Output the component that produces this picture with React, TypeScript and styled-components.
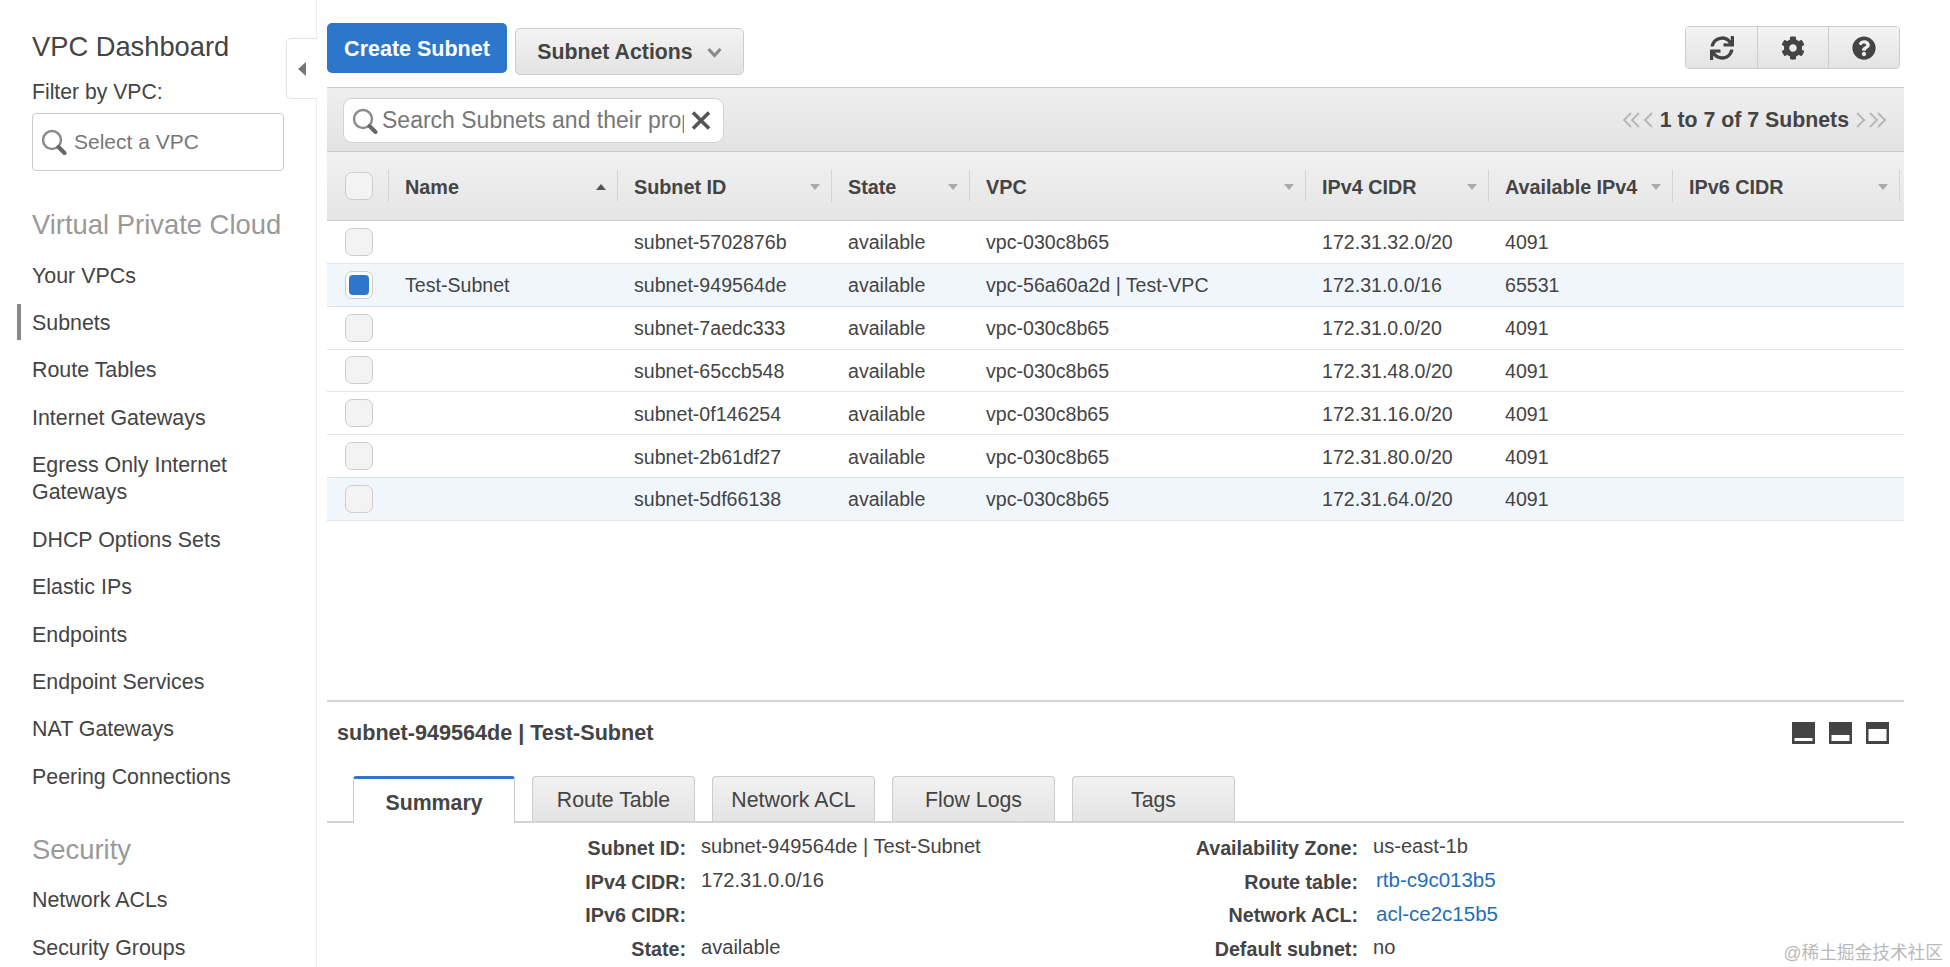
import React from "react";
import styled, { createGlobalStyle } from "styled-components";
import { FaSync, FaCog, FaQuestionCircle } from "react-icons/fa";

const Global = createGlobalStyle`
  html, body { margin: 0; padding: 0; background: #fff; }
  body { font-family: "Liberation Sans", Arial, sans-serif; color: #444; }
  * { box-sizing: border-box; }
`;

const Page = styled.div`
  position: relative;
  display: flex;
  width: 1950px;
  height: 967px;
  overflow: hidden;
  background: #fff;
`;

const Sidebar = styled.aside`
  position: relative;
  flex: 0 0 317px;
  padding: 31px 20px 0 32px;
  border-right: 1px solid #eee;
`;

const CollapseTab = styled.div`
  position: absolute;
  right: -1px;
  top: 38px;
  width: 31px;
  height: 61px;
  display: flex;
  align-items: center;
  padding-left: 11px;
  background: #fff;
  border: 1px solid #e4e4e4;
  border-right: none;
  border-radius: 5px 0 0 5px;
`;

const CollapseArrow = styled.span`
  width: 0;
  height: 0;
  border-top: 7px solid transparent;
  border-bottom: 7px solid transparent;
  border-right: 8px solid #777;
`;

const SideTitle = styled.div`
  font-size: 27.3px;
  line-height: 32px;
  color: #444;
`;

const FilterLabel = styled.div`
  margin-top: 16px;
  font-size: 21.2px;
  line-height: 26px;
  color: #444;
`;

const SelectBox = styled.div`
  margin-top: 8px;
  width: 252px;
  height: 58px;
  display: flex;
  align-items: center;
  gap: 7px;
  padding-left: 8px;
  border: 1px solid #ccc;
  border-radius: 4px;
  font-size: 21px;
  color: #777;
`;

const SectionTitle = styled.div<{ $top: number }>`
  margin-top: ${(p) => p.$top}px;
  font-size: 27.4px;
  line-height: 32px;
  color: #999;
`;

const NavList = styled.nav`
  margin-top: 21.5px;
  display: flex;
  flex-direction: column;
  gap: 20.45px;
`;

const NavItem = styled.div<{ $active?: boolean }>`
  position: relative;
  font-size: 21.4px;
  line-height: 27px;
  color: #444;
  ${(p) =>
    p.$active &&
    `&::before {
      content: "";
      position: absolute;
      left: -15px;
      top: -6px;
      width: 4px;
      height: 36px;
      background: #888;
    }`}
`;

const Main = styled.main`
  flex: 0 0 1577px;
  min-width: 0;
  margin-left: 10px;
  display: flex;
  flex-direction: column;
  height: 967px;
`;

const TopBar = styled.div`
  flex: 0 0 87px;
  display: flex;
  align-items: flex-start;
`;

const PrimaryButton = styled.button`
  margin-top: 23px;
  width: 180px;
  height: 50px;
  padding-top: 4px;
  border: none;
  border-radius: 5px;
  background: #2c77cb;
  color: #fff;
  font: bold 21.5px "Liberation Sans", Arial, sans-serif;
`;

const ActionsButton = styled.button`
  margin: 28px 0 0 8px;
  width: 229px;
  height: 47px;
  padding-top: 2px;
  display: flex;
  align-items: center;
  justify-content: center;
  gap: 14px;
  border: 1px solid #ccc;
  border-radius: 5px;
  background: linear-gradient(#f3f3f3, #e3e3e3);
  color: #444;
  font: bold 21.3px "Liberation Sans", Arial, sans-serif;
`;

const ToolGroup = styled.div`
  margin: 26px 4px 0 auto;
  display: flex;
  height: 43px;
  border: 1px solid #ccc;
  border-radius: 4px;
  overflow: hidden;
`;

const ToolButton = styled.div`
  width: 71px;
  display: flex;
  align-items: center;
  justify-content: center;
  background: linear-gradient(#f3f3f3, #e4e4e4);
  color: #444;
  font-size: 24px;
  & + & { border-left: 1px solid #ccc; }
`;

const SearchBand = styled.div`
  flex: 0 0 65px;
  display: flex;
  align-items: center;
  padding: 0 16px;
  background: linear-gradient(#efefef, #e3e3e3);
  border-top: 1px solid #ccc;
  border-bottom: 1px solid #c9c9c9;
`;

const SearchBox = styled.div`
  width: 381px;
  height: 45px;
  margin-top: 2px;
  display: flex;
  align-items: center;
  padding-left: 8px;
  background: #fff;
  border: 1px solid #d2d2d2;
  border-radius: 9px;
`;

const SearchText = styled.div`
  margin: 0 7px 0 4px;
  width: 302px;
  overflow: hidden;
  white-space: nowrap;
  font-size: 23px;
  color: #777;
`;

const Pager = styled.div`
  margin-left: auto;
  margin-top: 1px;
  display: flex;
  align-items: center;
  font-weight: bold;
  font-size: 21.3px;
  color: #444;
`;

const PagerText = styled.span`
  margin: 0 5px;
`;

const TableHead = styled.div`
  flex: 0 0 69px;
  display: grid;
  grid-template-columns: 61px 229px 214px 138px 336px 183px 184px 227px minmax(0, 1fr);
  align-items: center;
  background: linear-gradient(#f1f1f1, #e5e5e5);
  border-bottom: 1px solid #c9c9c9;
`;

const CheckCell = styled.div`
  padding-left: 18px;
  display: flex;
  align-items: center;
`;

const HeadCell = styled.div`
  height: 32px;
  display: flex;
  align-items: center;
  justify-content: space-between;
  padding: 2px 11px 0 16px;
  border-left: 1px solid #d4d4d4;
  font-weight: bold;
  font-size: 19.8px;
  color: #444;
  white-space: nowrap;
`;

const HeadEnd = styled.div`
  height: 32px;
  border-left: 1px solid #d4d4d4;
`;

const Caret = styled.span<{ $up?: boolean }>`
  width: 0;
  height: 0;
  border-left: 5px solid transparent;
  border-right: 5px solid transparent;
  ${(p) =>
    p.$up
      ? "border-bottom: 6px solid #555;"
      : "border-top: 6px solid #aaa;"}
`;

const Box = styled.div<{ $checked?: boolean }>`
  width: 28px;
  height: 28px;
  display: flex;
  align-items: center;
  justify-content: center;
  border: 1px solid #ccc;
  border-radius: 7px;
  background: ${(p) => (p.$checked ? "#fff" : "#f3f3f3")};
`;

const BoxMark = styled.span`
  width: 20px;
  height: 20px;
  border-radius: 4px;
  background: #2c77cb;
`;

const Row = styled.div<{ $tint?: boolean }>`
  flex: 0 0 42.85px;
  display: grid;
  grid-template-columns: 61px 229px 214px 138px 336px 183px 184px 227px minmax(0, 1fr);
  align-items: center;
  background: ${(p) => (p.$tint ? "#f0f6fb" : "#fff")};
  border-bottom: 1px solid #e0e4e7;
`;

const Cell = styled.div`
  padding: 2px 0 0 17px;
  font-size: 19.6px;
  color: #444;
  white-space: nowrap;
`;

const Filler = styled.div`
  flex: 1 1 auto;
`;

const Detail = styled.section`
  flex: 0 0 267px;
  border-top: 2px solid #d4d4d4;
`;

const DetailHead = styled.div`
  height: 74px;
  display: flex;
  align-items: center;
  justify-content: space-between;
  padding: 0 15px 12px 10px;
`;

const DetailTitle = styled.div`
  font-weight: bold;
  font-size: 21.6px;
  color: #444;
`;

const PanelIcons = styled.div`
  display: flex;
  gap: 14px;
`;

const Tabs = styled.div`
  height: 47px;
  display: flex;
  align-items: flex-end;
  gap: 17px;
  padding-left: 26px;
  border-bottom: 2px solid #d4d4d4;
`;

const Tab = styled.div<{ $active?: boolean }>`
  width: ${(p) => (p.$active ? "162px" : "163px")};
  display: flex;
  align-items: center;
  justify-content: center;
  ${(p) =>
    p.$active
      ? `height: 47px;
         margin-bottom: -2px;
         padding-top: 5px;
         background: #fff;
         border: 1px solid #ccc;
         border-top: 3px solid #2c77cb;
         border-bottom: none;
         border-radius: 3px 3px 0 0;
         font-weight: bold;
         font-size: 21.3px;`
      : `height: 45px;
         padding-top: 2px;
         background: linear-gradient(#f1f1f1, #e4e4e4);
         border: 1px solid #ccc;
         border-bottom: none;
         border-radius: 4px 4px 0 0;
         font-size: 21.3px;`}
  color: #444;
`;

const DetailGrid = styled.div`
  margin-top: 8px;
  display: grid;
  grid-template-columns: 359px 280px 362px 1fr;
  column-gap: 15px;
  grid-auto-rows: 33.6px;
  align-items: center;
`;

const Label = styled.div`
  padding-top: 2px;
  text-align: right;
  font-weight: bold;
  font-size: 19.7px;
  color: #444;
  white-space: nowrap;
`;

const Value = styled.div`
  margin-top: -2px;
  font-size: 20.1px;
  color: #444;
  white-space: nowrap;
`;

const LinkValue = styled.a`
  margin: -2px 0 0 3px;
  font-size: 20.5px;
  color: #1f6fb5;
  white-space: nowrap;
`;

const Watermark = styled.div`
  position: absolute;
  right: 7px;
  bottom: 3px;
  font-family: "Liberation Sans", "Noto Sans CJK SC", sans-serif;
  font-size: 17.7px;
  color: #b9b9b9;
`;

const Lens = ({ size = 26 }: { size?: number }) => (
  <svg width={size} height={size} viewBox="0 0 26 26" fill="none">
    <circle cx="11" cy="11" r="9" stroke="#8a8a8a" strokeWidth="2.4" />
    <path d="M17.5 18l6 6" stroke="#666" strokeWidth="4" strokeLinecap="round" />
  </svg>
);

const Chev = ({ dir, double }: { dir: "l" | "r"; double?: boolean }) => {
  const pts = dir === "l" ? ["M10 2 3 9l7 7", "M18 2l-7 7 7 7"] : ["M3 2l7 7-7 7", "M11 2l7 7-7 7"];
  return (
    <svg width={double ? 21 : 13} height="18" viewBox={double ? "0 0 21 18" : "0 0 13 18"} fill="none" stroke="#b8b8b8" strokeWidth="2">
      <path d={pts[0]} />
      {double && <path d={pts[1]} />}
    </svg>
  );
};

const PanelIcon = ({ y, h }: { y: number; h: number }) => (
  <svg width="23" height="22" viewBox="0 0 23 22">
    <rect width="23" height="22" fill="#444" />
    <rect x="2.5" y={y} width="18" height={h} fill="#fff" />
  </svg>
);

const XIcon = () => (
  <svg width="20" height="19" viewBox="0 0 20 19" stroke="#555" strokeWidth="3.6" fill="none">
    <path d="M2 1.5l16 16M18 1.5l-16 16" />
  </svg>
);

const ChevDown = () => (
  <svg width="15" height="11" viewBox="0 0 15 11" fill="none" stroke="#888" strokeWidth="3">
    <path d="M1.5 2l6 6.5 6-6.5" />
  </svg>
);

const nav1 = ["Your VPCs", "Subnets", "Route Tables", "Internet Gateways", "Egress Only Internet Gateways", "DHCP Options Sets", "Elastic IPs", "Endpoints", "Endpoint Services", "NAT Gateways", "Peering Connections"];
const nav2 = ["Network ACLs", "Security Groups"];

const columns = ["Subnet ID", "State", "VPC", "IPv4 CIDR", "Available IPv4", "IPv6 CIDR"];

const rows = [
  { name: "", id: "subnet-5702876b", vpc: "vpc-030c8b65", cidr: "172.31.32.0/20", ip: "4091" },
  { name: "Test-Subnet", id: "subnet-949564de", vpc: "vpc-56a60a2d | Test-VPC", cidr: "172.31.0.0/16", ip: "65531", checked: true, tint: true },
  { name: "", id: "subnet-7aedc333", vpc: "vpc-030c8b65", cidr: "172.31.0.0/20", ip: "4091" },
  { name: "", id: "subnet-65ccb548", vpc: "vpc-030c8b65", cidr: "172.31.48.0/20", ip: "4091" },
  { name: "", id: "subnet-0f146254", vpc: "vpc-030c8b65", cidr: "172.31.16.0/20", ip: "4091" },
  { name: "", id: "subnet-2b61df27", vpc: "vpc-030c8b65", cidr: "172.31.80.0/20", ip: "4091" },
  { name: "", id: "subnet-5df66138", vpc: "vpc-030c8b65", cidr: "172.31.64.0/20", ip: "4091", tint: true },
];

const tabs = ["Route Table", "Network ACL", "Flow Logs", "Tags"];

export default function App() {
  return (
    <Page>
      <Global />
      <Sidebar>
        <CollapseTab>
          <CollapseArrow />
        </CollapseTab>
        <SideTitle>VPC Dashboard</SideTitle>
        <FilterLabel>Filter by VPC:</FilterLabel>
        <SelectBox>
          <Lens />
          Select a VPC
        </SelectBox>
        <SectionTitle $top={38}>Virtual Private Cloud</SectionTitle>
        <NavList>
          {nav1.map((n) => (
            <NavItem key={n} $active={n === "Subnets"}>{n}</NavItem>
          ))}
        </NavList>
        <SectionTitle $top={43}>Security</SectionTitle>
        <NavList>
          {nav2.map((n) => (
            <NavItem key={n}>{n}</NavItem>
          ))}
        </NavList>
      </Sidebar>
      <Main>
        <TopBar>
          <PrimaryButton>Create Subnet</PrimaryButton>
          <ActionsButton>
            Subnet Actions <ChevDown />
          </ActionsButton>
          <ToolGroup>
            <ToolButton><FaSync /></ToolButton>
            <ToolButton><FaCog /></ToolButton>
            <ToolButton><FaQuestionCircle /></ToolButton>
          </ToolGroup>
        </TopBar>
        <SearchBand>
          <SearchBox>
            <Lens />
            <SearchText>Search Subnets and their properties</SearchText>
            <XIcon />
          </SearchBox>
          <Pager>
            <Chev dir="l" double />
            <Chev dir="l" />
            <PagerText>1 to 7 of 7 Subnets</PagerText>
            <Chev dir="r" />
            <Chev dir="r" double />
          </Pager>
        </SearchBand>
        <TableHead>
          <CheckCell><Box /></CheckCell>
          <HeadCell>Name <Caret $up /></HeadCell>
          {columns.map((c) => (
            <HeadCell key={c}>{c} <Caret /></HeadCell>
          ))}
          <HeadEnd />
        </TableHead>
        {rows.map((r) => (
          <Row key={r.id} $tint={r.tint}>
            <CheckCell>
              <Box $checked={r.checked}>{r.checked && <BoxMark />}</Box>
            </CheckCell>
            <Cell>{r.name}</Cell>
            <Cell>{r.id}</Cell>
            <Cell>available</Cell>
            <Cell>{r.vpc}</Cell>
            <Cell>{r.cidr}</Cell>
            <Cell>{r.ip}</Cell>
          </Row>
        ))}
        <Filler />
        <Detail>
          <DetailHead>
            <DetailTitle>subnet-949564de | Test-Subnet</DetailTitle>
            <PanelIcons>
              <PanelIcon y={16} h={3} />
              <PanelIcon y={13} h={6} />
              <PanelIcon y={7} h={12} />
            </PanelIcons>
          </DetailHead>
          <Tabs>
            <Tab $active>Summary</Tab>
            {tabs.map((t) => (
              <Tab key={t}>{t}</Tab>
            ))}
          </Tabs>
          <DetailGrid>
            <Label>Subnet ID:</Label>
            <Value>subnet-949564de | Test-Subnet</Value>
            <Label>Availability Zone:</Label>
            <Value>us-east-1b</Value>
            <Label>IPv4 CIDR:</Label>
            <Value>172.31.0.0/16</Value>
            <Label>Route table:</Label>
            <LinkValue>rtb-c9c013b5</LinkValue>
            <Label>IPv6 CIDR:</Label>
            <Value />
            <Label>Network ACL:</Label>
            <LinkValue>acl-ce2c15b5</LinkValue>
            <Label>State:</Label>
            <Value>available</Value>
            <Label>Default subnet:</Label>
            <Value>no</Value>
          </DetailGrid>
        </Detail>
      </Main>
      <Watermark>@稀土掘金技术社区</Watermark>
    </Page>
  );
}
